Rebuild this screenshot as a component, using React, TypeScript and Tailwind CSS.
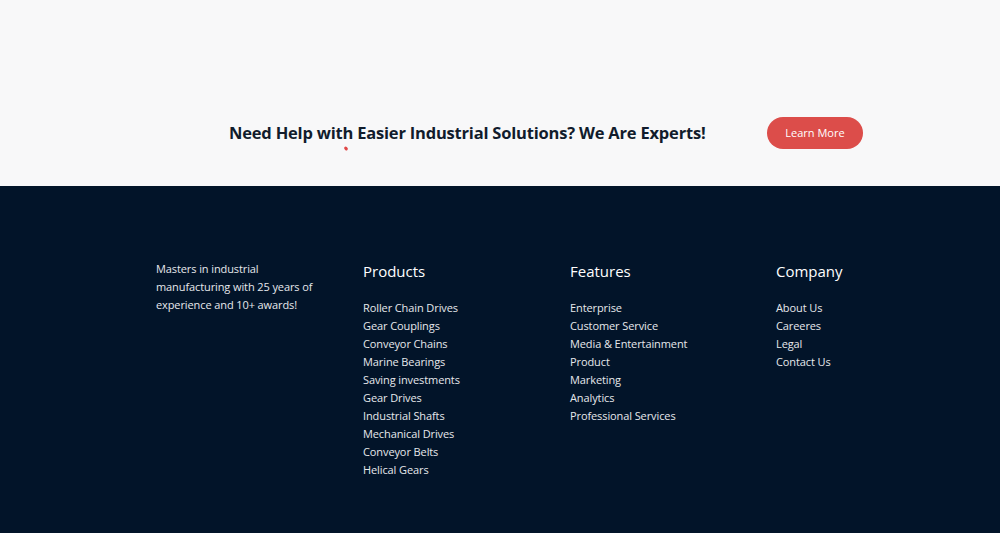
export default function App() {
  const products = [
    'Roller Chain Drives',
    'Gear Couplings',
    'Conveyor Chains',
    'Marine Bearings',
    'Saving investments',
    'Gear Drives',
    'Industrial Shafts',
    'Mechanical Drives',
    'Conveyor Belts',
    'Helical Gears',
  ]
  const features = [
    'Enterprise',
    'Customer Service',
    'Media & Entertainment',
    'Product',
    'Marketing',
    'Analytics',
    'Professional Services',
  ]
  const company = ['About Us', 'Careeres', 'Legal', 'Contact Us']

  const columns = [
    { title: 'Products', items: products },
    { title: 'Features', items: features },
    { title: 'Company', items: company },
  ]

  return (
    <div className="w-[1000px] h-[533px] overflow-hidden font-['Open_Sans',sans-serif]">
      <section className="h-[186px] bg-[#f8f8f9] pt-[117px]">
        <div className="flex items-center pl-[229px]">
          <h2 className="relative text-[16.5px] font-bold text-[#111c2c] tracking-[-0.2px]">
            Need Help with Easier Industrial Solutions? We Are Experts!
            <span className="absolute left-[115px] top-[26px] w-[4px] h-[3px] rotate-45 rounded-full bg-[#e04848]" />
          </h2>
          <button className="ml-auto mr-[137px] h-[32px] w-[96px] rounded-full bg-[#dc4d4a] text-[11px] text-white">
            Learn More
          </button>
        </div>
      </section>

      <footer className="h-[347px] bg-[#021429] pt-[74px] pl-[156px]">
        <div className="grid grid-cols-[207px_207px_206px_200px]">
          <p className="w-[165px] text-[11px] leading-[18px] tracking-[-0.1px] text-[#e6e8ec]">
            Masters in industrial manufacturing with 25 years of experience and 10+ awards!
          </p>
          {columns.map((col) => (
            <div key={col.title}>
              <h3 className="text-[15px] leading-[22px] text-white font-normal">{col.title}</h3>
              <ul className="mt-[17px]">
                {col.items.map((item) => (
                  <li key={item} className="text-[11px] leading-[18px] tracking-[-0.1px] text-[#e6e8ec]">
                    {item}
                  </li>
                ))}
              </ul>
            </div>
          ))}
        </div>
      </footer>
    </div>
  )
}
